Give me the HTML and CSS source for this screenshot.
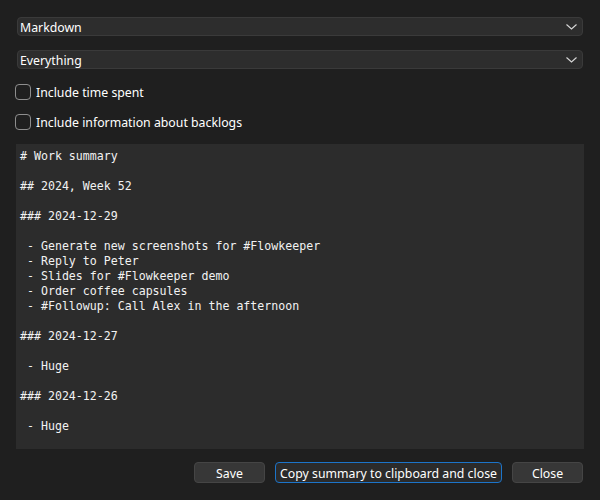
FILE: index.html
```html
<!DOCTYPE html>
<html>
<head>
<meta charset="utf-8">
<link rel="stylesheet" href="styles.css">
</head>
<body>
<div class="dialog">
  <div class="combo combo-first">
    <span class="combo-text">Markdown</span>
    <svg class="chev" width="11" height="6" viewBox="0 0 11 6"><polyline points="0.5,0.5 5.5,5 10.5,0.5" fill="none" stroke="#d8d8d8" stroke-width="1.1"/></svg>
  </div>
  <div class="combo combo-second">
    <span class="combo-text">Everything</span>
    <svg class="chev" width="11" height="6" viewBox="0 0 11 6"><polyline points="0.5,0.5 5.5,5 10.5,0.5" fill="none" stroke="#d8d8d8" stroke-width="1.1"/></svg>
  </div>
  <label class="check check-first"><span class="box"></span><span class="check-text">Include time spent</span></label>
  <label class="check check-second"><span class="box"></span><span class="check-text">Include information about backlogs</span></label>
  <pre class="summary"># Work summary

## 2024, Week 52

### 2024-12-29

 - Generate new screenshots for #Flowkeeper
 - Reply to Peter
 - Slides for #Flowkeeper demo
 - Order coffee capsules
 - #Followup: Call Alex in the afternoon

### 2024-12-27

 - Huge

### 2024-12-26

 - Huge</pre>
  <div class="buttons">
    <button class="btn btn-small">Save</button>
    <button class="btn btn-default">Copy summary to clipboard and close</button>
    <button class="btn btn-small">Close</button>
  </div>
</div>
</body>
</html>
```

FILE: styles.css
```css
html, body {
  margin: 0;
  padding: 0;
  background: #1f1f1f;
  width: 600px;
  height: 500px;
  overflow: hidden;
}
.dialog {
  display: flex;
  flex-direction: column;
  padding: 17px 16px 0 16px;
  font-family: "Noto Sans", "Open Sans", sans-serif;
  font-size: 12.3px;
  color: #ffffff;
}
.combo {
  box-sizing: border-box;
  height: 19px;
  margin: 0 1px;
  background: #2d2d2d;
  border: 1px solid #3a3a3a;
  border-radius: 4px;
  display: flex;
  align-items: center;
  justify-content: space-between;
  padding: 0 5px 0 2px;
}
.combo-second { margin-top: 14px; }
.combo-text { line-height: 17px; padding-top: 2px; }
.chev { display: block; margin-top: 1px; }
.check {
  display: flex;
  align-items: center;
  height: 16px;
  margin-left: -1px;
}
.check-first { margin-top: 15px; }
.check-second { margin-top: 14px; }
.box {
  box-sizing: border-box;
  width: 16px;
  height: 16px;
  border: 1px solid #8e8e8e;
  border-radius: 4px;
  margin-right: 5px;
}
.check-text { line-height: 16px; padding-top: 2px; }
.summary {
  box-sizing: border-box;
  margin: 14px 0 0 0;
  height: 305px;
  background: #2c2c2c;
  padding: 5px 4px;
  font-family: "DejaVu Sans Mono", monospace;
  font-size: 11.6px;
  line-height: 15px;
  color: #f2f2f2;
  overflow: hidden;
}
.buttons {
  display: flex;
  justify-content: flex-end;
  gap: 10px;
  margin-top: 13px;
  padding-right: 1px;
}
.btn {
  box-sizing: border-box;
  height: 21px;
  font-family: "Noto Sans", "Open Sans", sans-serif;
  font-size: 12.3px;
  color: #ffffff;
  background: #373737;
  border: 1px solid #454545;
  border-radius: 4px;
  padding: 1px 0 0 0;
  line-height: 19px;
}
.btn-small { width: 71px; }
.btn-default {
  width: 227px;
  background: #2b2b2b;
  border: 1px solid #1c74c9;
}
```
